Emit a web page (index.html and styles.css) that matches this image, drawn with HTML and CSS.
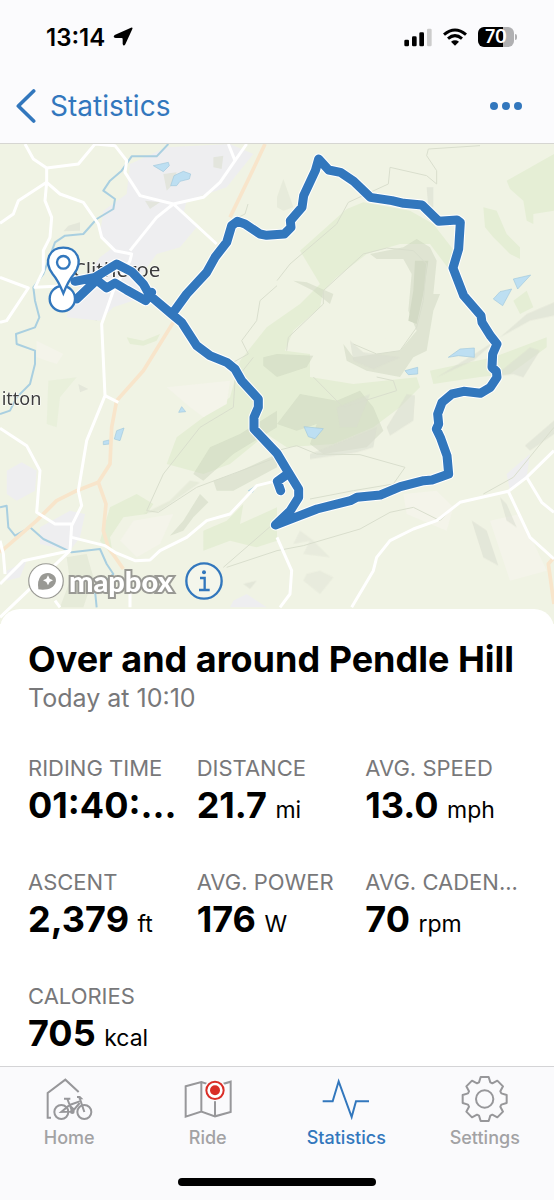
FILE: index.html
```html
<!DOCTYPE html>
<html lang="en">
<head>
    <meta charset="UTF-8">
    <meta name="viewport" content="width=device-width, initial-scale=1.0">
    <title>Statistics</title>
    <link rel="stylesheet" href="styles.css">
</head>
<body>
    <header class="header">
        <div class="status-bar">
            <div class="status-time">
                <span>13:14</span>
                <svg width="20" height="20" viewBox="0 0 60 60"><path d="M54 2Q60 0 58 6L37 52Q32 60 29 51V36Q29 33 26 33H8Q-2 31 5 24Z"/></svg>
            </div>
            <div class="status-icons">
                <svg width="28" height="19" viewBox="0 0 84 57">
                    <rect x="1" y="35" width="14" height="20" rx="4"/>
                    <rect x="24" y="25" width="14" height="30" rx="4"/>
                    <rect x="46" y="13" width="14" height="42" rx="4"/>
                    <rect x="69" y="2" width="14" height="53" rx="4" fill="#ccc"/>
                </svg>
                <svg width="24" height="18" viewBox="0 0 72 54" fill="none" stroke="#000" stroke-width="9">
                    <path d="M3 20Q36-8 69 20M15 32Q36 14 57 32"/>
                    <path d="M24 41Q36 33 48 41L36 53Z" fill="#000" stroke="none"/>
                </svg>
                <div class="battery"><span>70</span></div>
            </div>
        </div>
        <nav class="nav-bar">
            <a class="back" href="#">
                <svg width="20" height="34" viewBox="0 0 60 102"><path d="M53 6L7 51L53 96" fill="none" stroke="currentColor" stroke-width="11" stroke-linecap="round" stroke-linejoin="round"/></svg>
                <span>Statistics</span>
            </a>
            <button class="more" type="button" aria-label="More">
                <svg width="34" height="10" viewBox="0 0 102 30" fill="currentColor"><circle cx="15" cy="15" r="12"/><circle cx="51" cy="15" r="12"/><circle cx="87" cy="15" r="12"/></svg>
            </button>
        </nav>
    </header>

    <main>
        <div class="map">
            <svg class="map-canvas" viewBox="0 0 1662 1440">
                <rect width="1662" height="1440" fill="#f0f3e4"/>

                <!-- woodland and moor -->
                <g fill="#e5eed5">
                    <path d="M900 320L1040 195L1090 175L1230 200L1300 240L1370 330L1350 380L1290 300L1200 300L1100 330L1010 400L970 440L960 490L880 560L855 620L930 630L930 699L1060 720L1250 700L1260 730L1200 790L1120 850L1000 900L860 910L800 870L690 960L610 990L500 960L530 880L690 760L720 650L800 550L900 480L960 420Z"/>
                    <path d="M1520 110L1662 30V200L1600 210L1600 240L1580 230L1570 170L1530 135Z"/>
                    <path d="M1450 190L1490 200L1520 270L1560 310V345L1530 330L1480 280L1455 250Z"/>
                    <path d="M330 1090L410 1050L460 1080L440 1110L370 1120L330 1180L340 1240L300 1190Z"/>
                    <path d="M610 1160L680 1130L730 1080L720 1140L831 1090V1190L770 1210L690 1190L610 1220Z"/>
                    <path d="M1480 640L1640 580V610L1530 690L1440 699L1300 720L1290 680Z"/>
                    <path d="M380 580L430 590L480 570L470 590L430 605L390 600Z"/>
                    <path d="M145 710L230 700L180 760L170 850L140 840Z" opacity=".6"/>
                    <path d="M1540 470L1580 440L1600 490L1560 510Z"/>
                </g>
                <path d="M1010 440L1130 330L1240 330L1250 420L1220 500L1170 520L1150 620L1080 620L1020 580L930 640L930 560L980 490Z" fill="#f0f3e4"/>

                <!-- pale fields -->
                <g fill="#f4f4ea">
                    <path d="M500 730L690 710L680 780L610 820L570 790Z"/>
                    <path d="M1210 1050L1310 1040L1360 1090L1340 1160L1220 1110Z"/>
                    <path d="M1470 1130L1560 1110L1640 1280L1530 1310Z"/>
                    <path d="M110 590L190 630L170 660L110 640Z"/>
                    <path d="M400 1130L520 1110L480 1200L410 1240L360 1190Z"/>
                </g>

                <!-- hill shading -->
                <g fill="#c9d3bb" opacity=".45">
                    <path d="M1110 330L1210 310L1250 285L1290 310L1310 350L1300 450L1320 450L1300 500L1280 620L1240 640L1200 699L1100 680L1040 650L1030 600L1060 640L1200 620L1250 560L1225 500L1235 390L1210 345L1130 345Z"/>
                    <path d="M1245 350L1285 350L1270 450L1250 540L1225 530L1240 440Z" fill="#aebb9f"/>
                    <path d="M880 410L920 415L1000 450L990 480L940 440Z"/>
                    <path d="M831 630L940 635L920 670L831 699L790 665V640Z"/>
                    <path d="M831 840L900 750L1010 770L1080 740L1120 790L1150 860L1100 910L970 930L930 900L950 840L890 860Z"/>
                    <path d="M580 990L630 910L720 870L831 800V850L700 930L610 1010Z"/>
                    <path d="M640 1010L700 990L831 930V970L700 1040L650 1040Z"/>
                    <path d="M510 1175L550 1130L600 1050L625 1075L580 1120L550 1160Z"/>
                    <path d="M430 1110L510 1070L570 1010L600 1015L480 1100Z" opacity=".6"/>
                    <path d="M270 520L310 455L320 480L290 530Z"/>
                    <path d="M200 1240L260 1230L280 1300L250 1390H180L210 1310Z" opacity=".6"/>
                    <path d="M831 160L850 105L880 190L850 200L831 190Z" opacity=".5"/>
                </g>
                <g fill="#d9dccf" opacity=".55">
                    <path d="M1160 850L1220 750L1245 755L1240 830L1170 875Z"/>
                    <path d="M1010 790L1110 750L1070 850L1020 850Z"/>
                    <path d="M930 930L1130 850L1120 910L1070 925L930 945Z"/>
                    <path d="M1310 700L1440 620L1500 580L1580 510L1662 475V515L1590 530L1500 580L1420 650Z"/>
                    <path d="M1570 700L1540 690L1480 699L1590 610L1620 620Z"/>
                    <path d="M1575 905L1662 830V870L1590 920Z"/>
                    <path d="M1415 1130L1460 1160L1495 1265L1450 1240Z"/>
                    <path d="M1500 1060L1520 1080L1550 1150L1520 1130Z"/>
                    <path d="M1280 130H1300V190H1285ZM1050 590L1090 625L1200 640L1120 675L1060 650Z"/>
                    <path d="M880 1200L930 1190L910 1230L990 1240L940 1190L900 1160ZM920 1290L960 1280L1000 1300L960 1350L910 1310Z" opacity=".6"/>
                    <path d="M730 1320L770 1310L750 1335Z"/>
                </g>

                <!-- built up areas -->
                <g fill="#eeeef0">
                    <path d="M390 60L500 10L690 0L760 30L680 130L560 170L550 210L590 250L540 310L470 330L420 400L430 460L340 490L300 530L200 520L210 470L300 340L340 310L300 270L310 200L380 150Z"/>
                    <path d="M20 980L65 955L110 980L105 1040L50 1070L20 1050Z"/>
                    <path d="M120 1150L210 1100L255 1110L240 1180L210 1220L120 1200Z"/>
                    <path d="M20 1280L80 1250L60 1300L20 1310ZM700 1370L740 1350L800 1390H690Z"/>
                    <path d="M1520 990L1590 930L1580 1000L1530 1040Z"/>
                </g>
                <g fill="#dfe2d6" opacity=".7">
                    <path d="M490 90L530 85L520 120L500 140ZM640 40L670 35L665 75L640 70ZM435 170L480 175L450 195Z"/>
                    <path d="M205 245L240 235V260L190 262ZM235 720L265 735L240 745Z"/>
                </g>

                <!-- paths -->
                <g fill="none" stroke="#d9decd" stroke-width="3">
                    <path d="M831 410L870 360L1010 240L1045 175L1165 120L1170 70L1280 95L1310 120L1310 80L1280 35L1285 15L1440 5"/>
                    <path d="M860 620L865 580L970 480L970 440L1090 330L1160 312L1240 320L1280 360L1270 470L1250 550L1200 620L1130 630L1060 600"/>
                    <path d="M940 699L1030 790L1190 740L1180 710L1130 699M831 920L890 905L950 930L1080 932L1215 970L1180 1020L1060 1040L930 1065"/>
                    <path d="M440 1100L490 990L600 850L700 790L705 710L760 640M440 1100L475 1105L590 1030L831 940"/>
                    <path d="M670 1270L831 1130M680 1270L831 1220L910 1205L1080 1155L1170 1105L1240 1090L1320 1130L1370 1080"/>
                    <path d="M831 425L780 470L770 530L725 590L745 630L690 660M744 180L735 210L705 225M1450 1050L1540 1000L1662 850"/>
                </g>

                <!-- rivers -->
                <g fill="none" stroke="#a9cfe0" stroke-width="6" stroke-linejoin="round">
                    <path d="M505 0L470 37L395 37L365 80L330 110L310 140L345 165L340 195L290 225L250 270L195 275L165 295L145 350L130 390L100 430L105 470L118 520L105 550L48 570L50 600L105 620L105 660L90 720L50 760L30 800L0 810"/>
                    <path d="M0 1090L20 1085L25 1150L45 1175L90 1150L130 1185L215 1225L300 1215L320 1260L340 1290L285 1340L290 1390"/>
                </g>
                <g fill="#bddff2" stroke="#a1c9dc" stroke-width="2">
                    <path d="M460 65L505 55L508 65L490 83ZM512 125L522 95L550 82L572 90L568 105L540 112L530 125Z"/>
                    <path d="M1540 405L1592 393L1553 435ZM1480 465L1500 443L1535 435L1508 485ZM1345 640L1380 615L1423 612V640L1375 635ZM1215 680L1253 670V690L1225 692Z"/>
                    <path d="M912 848L970 854L945 884L925 878ZM343 885L350 860L372 852L360 890ZM310 892L328 888V900L310 902ZM536 805L545 788L557 803ZM745 1040L768 1025L758 1045Z"/>
                </g>

                <!-- roads -->
                <g fill="none" stroke="#f8e5cb" stroke-width="11" stroke-linejoin="round">
                    <path d="M795 0L760 75L690 220M520 535L430 680L350 770L335 850L330 960L295 1015L230 1040L170 1070L110 1130L0 1225"/>
                    <path d="M295 1015L318 1080L310 1160L325 1210L370 1275M1662 1240L1645 1260L1662 1380"/>
                </g>
                <g fill="none" stroke="#fff" stroke-width="9" stroke-linejoin="round">
                    <path d="M75 0L100 45L140 72L235 60L285 0L345 5L380 50L375 85L420 155L520 180L610 160L660 115L705 50L740 0M705 50L685 0"/>
                    <path d="M140 72L140 115L180 150L250 175L295 240L305 280L345 320L395 330L390 350L340 440L305 540L315 755L260 890L235 1040L245 1085L215 1145L210 1220L70 1250L0 1320"/>
                    <path d="M140 115L55 170L40 210L0 238M140 115L135 170L155 220L150 280L130 320L130 380L105 430L200 425M0 400L85 432L20 530L0 535"/>
                    <path d="M520 180L470 220L390 320M520 180L650 300M315 755L355 775"/>
                    <path d="M0 853L80 905L120 980L110 1105L165 1140L215 1140M215 1180L315 1205L345 1225L405 1250L450 1248L480 1220L560 1180L620 1130L690 1110L770 1025L831 1010"/>
                    <path d="M210 1220L0 1420M165 1370L180 1390M390 1330V1390M0 1190L10 1230L15 1290"/>
                    <path d="M831 1180L875 1280L870 1350L840 1390M1055 1390L1120 1280L1130 1240L1170 1190L1240 1155L1310 1130L1380 1075L1525 1042L1580 1000L1662 920M1525 1042L1590 1180L1662 1245M1580 1000L1625 1075L1662 1105"/>
                </g>

                <text class="map-label town" x="218" y="399">Clitheroe</text>
                <text class="map-label" x="5" y="782">itton</text>

                <!-- recorded ride -->
                <defs>
                    <path id="ride" d="M225 412L285 400L350 360L395 383L430 420L450 455L515 510L545 535L590 605L630 635L680 655L705 675L725 710L775 765L775 790L762 820L762 855L831 928L862 980L896 1035V1060L871 1100L826 1143L886 1120L951 1095L1051 1070L1071 1060L1141 1053L1201 1028L1271 1010L1296 1008L1346 990L1341 935L1321 880L1309 855L1316 840L1313 810L1326 775L1356 750L1391 742L1441 748L1471 730L1491 700L1489 682L1476 670L1478 630L1491 600L1471 575L1446 535L1443 515L1391 455L1359 372L1376 315L1381 235L1371 228L1316 232L1266 183L1211 178L1176 170L1111 160L1061 112L1021 85L986 78L956 45L946 80L911 155L906 190L871 230L873 250L853 270L800 274L780 270L735 240L712 232L695 245L680 295L645 340L620 385L560 450L520 505M230 465L290 408L320 432L345 417L380 438L437 470L455 445M867 987L832 1012L842 1040"/>
                </defs>
                <g fill="none" stroke-linecap="round" stroke-linejoin="round">
                    <use href="#ride" stroke="#fff" stroke-width="33"/>
                    <use href="#ride" stroke="#3277bd" stroke-width="27"/>
                </g>
                <g fill="#fff" stroke="#3277bd" stroke-width="7">
                    <circle cx="187" cy="464" r="38"/>
                    <path d="M190 448Q175 410 158 390C128 350 150 311 190 311S252 350 222 390Q205 410 190 448Z"/>
                    <circle cx="190" cy="355" r="19"/>
                </g>
            </svg>
            <div class="attribution">
                <a class="mapbox" href="#">
                    <svg width="36" height="36" viewBox="0 0 108 108">
                        <circle cx="54" cy="54" r="50" fill="#fff" stroke="#999994" stroke-width="7"/>
                        <path d="M31 79Q27 52 39 38C52 25 75 28 82 43C89 60 75 76 58 79Q44 81 31 79Z" fill="#999994"/>
                        <path d="M60 37L65 47L75 52L65 57L60 67L55 57L45 52L55 47Z" fill="#fff"/>
                    </svg>
                    <span>mapbox</span>
                </a>
                <button class="info" type="button" aria-label="Map information">
                    <svg width="38" height="38" viewBox="0 0 114 114" fill="none" stroke="currentColor" stroke-width="7">
                        <circle cx="57" cy="57" r="53" fill="#f4f6ec"/>
                        <path d="M45 48H59V84M42 84H74"/>
                        <circle cx="57" cy="31" r="6" fill="currentColor" stroke="none"/>
                    </svg>
                </button>
            </div>
        </div>

        <section class="card">
            <h1>Over and around Pendle Hill</h1>
            <p class="date">Today at 10:10</p>
            <dl class="stats">
                <div>
                    <dt>RIDING TIME</dt>
                    <dd>01:40:...</dd>
                </div>
                <div>
                    <dt>DISTANCE</dt>
                    <dd>21.7 <small>mi</small></dd>
                </div>
                <div>
                    <dt>AVG. SPEED</dt>
                    <dd>13.0 <small>mph</small></dd>
                </div>
                <div>
                    <dt>ASCENT</dt>
                    <dd>2,379 <small>ft</small></dd>
                </div>
                <div>
                    <dt>AVG. POWER</dt>
                    <dd>176 <small>W</small></dd>
                </div>
                <div>
                    <dt>AVG. CADEN...</dt>
                    <dd>70 <small>rpm</small></dd>
                </div>
                <div>
                    <dt>CALORIES</dt>
                    <dd>705 <small>kcal</small></dd>
                </div>
            </dl>
        </section>
    </main>

    <footer class="tab-bar">
        <nav class="tabs">
            <a class="tab" href="#">
                <svg viewBox="0 0 144 144">
                    <path d="M18 128H8V54L61 14L101 51"/>
                    <g stroke-width="6">
                        <circle cx="49" cy="111" r="21"/>
                        <circle cx="118" cy="111" r="21"/>
                        <path d="M57 71H76M67 72L82 110L49 111L74 90L104 79M104 84L82 110M74 92L88 104M96 66H104L108 70L101 70M103 66L118 111"/>
                        <circle cx="82" cy="110" r="4"/>
                    </g>
                </svg>
                <span>Home</span>
            </a>
            <a class="tab" href="#">
                <svg viewBox="0 0 144 144">
                    <path d="M5 34L52 21L93 34L140 20V111L93 124L52 110L5 125ZM52 21V110M93 34V124"/>
                    <circle cx="93" cy="46" r="33" fill="#fafafc" stroke="none"/>
                    <circle cx="93" cy="46" r="26" fill="#fff" stroke="#d92d27"/>
                    <circle cx="93" cy="46" r="15" fill="#d92d27" stroke="none"/>
                </svg>
                <span>Ride</span>
            </a>
            <a class="tab active" href="#">
                <svg viewBox="0 0 144 144">
                    <path d="M2 79H32L50 19L89 126L102 79H141"/>
                </svg>
                <span>Statistics</span>
            </a>
            <a class="tab" href="#">
                <svg viewBox="0 0 144 144">
                    <g transform="translate(71 72)" stroke-linejoin="round">
                        <path d="M-17-50L-12-66H12L17-50L23-47L38-55L55-38L47-23L50-17L66-12V12L50 17L47 23L55 38L38 55L23 47L17 50L12 66H-12L-17 50L-23 47L-38 55L-55 38L-47 23L-50 17L-66 12V-12L-50-17L-47-23L-55-38L-38-55L-23-47Z"/>
                        <circle r="26"/>
                    </g>
                </svg>
                <span>Settings</span>
            </a>
        </nav>
        <div class="home-indicator"></div>
    </footer>
</body>
</html>
```

FILE: styles.css
```css
* {
    box-sizing: border-box;
}

body {
    font-family: Inter, "Liberation Sans", sans-serif;
    background-color: #fff;
    color: #000;
    display: flex;
    flex-direction: column;
    min-height: 100vh;
    margin: 0;
}

svg {
    display: block;
}

a {
    color: inherit;
    text-decoration: none;
}

button {
    background: none;
    border: none;
    padding: 0;
    color: #3277bd;
    cursor: pointer;
}

main {
    flex: 1;
}

/* status bar + navigation */
.header {
    background-color: #fbfbfd;
    border-bottom: 1px solid #d6d6d2;
}

.status-bar {
    display: flex;
    justify-content: space-between;
    align-items: center;
    height: 74px;
    padding: 0 40px 0 46px;
}

.status-time {
    display: flex;
    align-items: center;
    gap: 8px;
    font-size: 24px;
    font-weight: 600;
}

.status-icons {
    display: flex;
    align-items: center;
    gap: 11px;
}

.battery {
    position: relative;
    width: 36px;
    height: 20px;
    border-radius: 6px;
    background: linear-gradient(to right, #000 70%, #b0b0b2 70%);
    color: #fff;
    font-size: 18px;
    font-weight: 600;
    line-height: 20px;
    text-align: center;
}

.battery::after {
    content: "";
    position: absolute;
    top: 7px;
    right: -3px;
    width: 2px;
    height: 6px;
    border-radius: 0 2px 2px 0;
    background-color: #b0b0b2;
}

.nav-bar {
    display: flex;
    justify-content: space-between;
    align-items: center;
    height: 69px;
    padding: 0 31px 6px 16px;
    color: #3277bd;
}

.back {
    display: flex;
    align-items: center;
    gap: 14px;
    font-size: 28px;
}

/* map */
.map {
    position: relative;
}

.map-canvas {
    width: 100%;
}

.map-label {
    font-family: "Noto Sans", sans-serif;
    font-size: 54px;
    fill: #3c3c3c;
    stroke: #fff;
    stroke-width: 3px;
    paint-order: stroke;
}

.map-label.town {
    font-size: 62px;
}

.attribution {
    position: absolute;
    left: 28px;
    bottom: 24px;
    display: flex;
    align-items: center;
    gap: 12px;
}

.mapbox {
    display: flex;
    align-items: center;
    gap: 5px;
    color: #fff;
    font-family: Lato, sans-serif;
    font-size: 29px;
    font-weight: 900;
    line-height: 36px;
    -webkit-text-stroke: 4px #999994;
    paint-order: stroke fill;
    stroke-linejoin: round;
}

/* ride details */
.card {
    position: relative;
    margin-top: -15px;
    padding: 28px 28px 10px;
    border-radius: 20px 20px 0 0;
    background-color: #fff;
}

h1 {
    margin: 0;
    font-size: 36px;
    line-height: 44px;
    white-space: nowrap;
}

.date {
    margin: 0;
    color: #78787a;
    font-size: 25px;
    line-height: 34px;
}

.stats {
    display: grid;
    grid-template-columns: repeat(3, 1fr);
    gap: 40px 8px;
    margin: 38px 0 0;
    white-space: nowrap;
}

.stats dt {
    color: #78787a;
    font-size: 22px;
    line-height: 30px;
}

.stats dd {
    margin: 0;
    font-size: 36px;
    font-weight: 700;
    line-height: 44px;
}

.stats small {
    font-size: 23px;
    font-weight: 400;
    line-height: 1;
}

/* tab bar */
.tab-bar {
    height: 134px;
    border-top: 1px solid #d4d4d6;
    background-color: #fafafc;
}

.tabs {
    display: grid;
    grid-template-columns: repeat(4, 1fr);
    padding-top: 8px;
}

.tab {
    display: flex;
    flex-direction: column;
    align-items: center;
    gap: 3px;
    color: #a2a2a4;
    font-size: 18px;
    font-weight: 500;
    line-height: 24px;
}

.tab svg {
    width: 48px;
    height: 48px;
    fill: none;
    stroke: #97979a;
    stroke-width: 6px;
}

.tab.active {
    color: #3277bd;
}

.tab.active svg {
    stroke: #3277bd;
}

.home-indicator {
    width: 198px;
    height: 8px;
    margin: 28px auto 0;
    border-radius: 4px;
    background-color: #000;
}
```
